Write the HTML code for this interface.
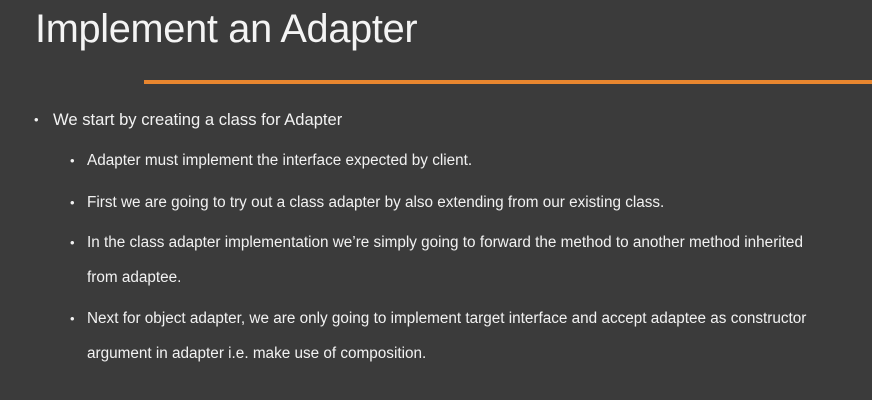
<!DOCTYPE html>
<html><head><style>
body{margin:0;width:872px;height:400px;background:#3b3b3b;overflow:hidden;font-family:"Liberation Sans",sans-serif;color:#fff;position:relative}
.t{position:absolute;left:35px;top:7px;font-size:39.7px;font-weight:normal;color:#f4f4f4;letter-spacing:-0.3px;white-space:nowrap}
.line{position:absolute;left:144px;top:80px;width:728px;height:4px;background:#e8862f}
.p{position:absolute;white-space:nowrap;color:#f2f2f2}
.b1{left:53px;font-size:16.6px}
.b2{left:87px;font-size:15.3px}
.d{position:absolute;font-size:13px;color:#f2f2f2}
</style></head><body>
<div class="t">Implement an Adapter</div>
<div class="line"></div>
<div class="d" style="left:34px;top:112px">•</div>
<div class="p b1" style="top:110px">We start by creating a class for Adapter</div>
<div class="d" style="left:70px;top:153px">•</div>
<div class="p b2" style="top:152px">Adapter must implement the interface expected by client.</div>
<div class="d" style="left:70px;top:195px">•</div>
<div class="p b2" style="top:194px">First we are going to try out a class adapter by also extending from our existing class.</div>
<div class="d" style="left:70px;top:235px">•</div>
<div class="p b2" style="top:234px">In the class adapter implementation we’re simply going to forward the method to another method inherited</div>
<div class="p b2" style="top:269px">from adaptee.</div>
<div class="d" style="left:70px;top:311px">•</div>
<div class="p b2" style="top:310px">Next for object adapter, we are only going to implement target interface and accept adaptee as constructor</div>
<div class="p b2" style="top:345px">argument in adapter i.e. make use of composition.</div>
</body></html>
